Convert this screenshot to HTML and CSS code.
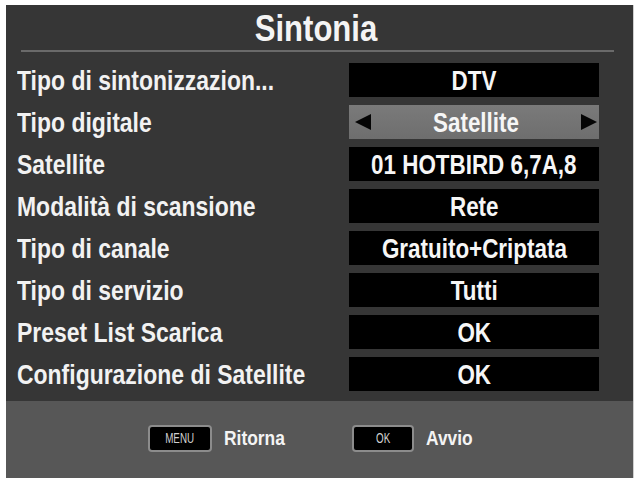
FILE: index.html
```html
<!DOCTYPE html>
<html lang="it">
<head>
<meta charset="utf-8">
<title>Sintonia</title>
<link rel="stylesheet" href="styles.css">
</head>
<body>
<div class="screen">
  <div class="header">
    <h1 class="title">Sintonia</h1>
  </div>
  <div class="divider"></div>
  <div class="rows">
    <div class="row"><span class="label"><span class="ltext">Tipo di sintonizzazion...</span></span><span class="value"><span class="vtext">DTV</span></span></div>
    <div class="row"><span class="label"><span class="ltext">Tipo digitale</span></span><span class="value selected"><span class="arrow left"></span><span class="vtext">Satellite</span><span class="arrow right"></span></span></div>
    <div class="row"><span class="label"><span class="ltext">Satellite</span></span><span class="value"><span class="vtext">01 HOTBIRD 6,7A,8</span></span></div>
    <div class="row"><span class="label"><span class="ltext">Modalità di scansione</span></span><span class="value"><span class="vtext">Rete</span></span></div>
    <div class="row"><span class="label"><span class="ltext">Tipo di canale</span></span><span class="value"><span class="vtext">Gratuito+Criptata</span></span></div>
    <div class="row"><span class="label"><span class="ltext">Tipo di servizio</span></span><span class="value"><span class="vtext">Tutti</span></span></div>
    <div class="row"><span class="label"><span class="ltext">Preset List Scarica</span></span><span class="value"><span class="vtext">OK</span></span></div>
    <div class="row"><span class="label"><span class="ltext">Configurazione di Satellite</span></span><span class="value"><span class="vtext">OK</span></span></div>
  </div>
  <div class="footer">
    <div class="hint"><span class="key menu"><span class="keytext">MENU</span></span><span class="hinttext">Ritorna</span></div>
    <div class="hint"><span class="key ok"><span class="keytext">OK</span></span><span class="hinttext">Avvio</span></div>
  </div>
</div>
</body>
</html>
```
FILE: styles.css
```css
html, body {
  margin: 0;
  padding: 0;
  background: #ffffff;
}
body {
  font-family: "Liberation Sans", Arial, sans-serif;
  font-weight: bold;
  color: #ffffff;
}
.screen {
  margin: 5px 0 0 6px;
  width: 627px;
  height: 473px;
  background: #363636;
  display: flex;
  flex-direction: column;
  box-shadow: 1px 0 0 #cfcfcf;
}
.header {
  height: 45px;
  display: flex;
  align-items: center;
  justify-content: center;
}
.title {
  margin: 0;
  font-size: 37px;
  line-height: 1;
  font-weight: bold;
  color: #f4f4f4;
  transform: scaleX(0.84);
  position: relative;
  left: -4px;
  top: 1px;
}
.divider {
  height: 2px;
  margin: 0 19px 0 15px;
  background: #6a6a6a;
}
.rows {
  padding: 11px 34px 0 11px;
  display: flex;
  flex-direction: column;
  gap: 8px;
}
.row {
  height: 34px;
  display: flex;
  align-items: center;
}
.label {
  flex: 1 1 0;
  min-width: 0;
  white-space: nowrap;
}
.ltext {
  display: inline-block;
  font-size: 27px;
  line-height: 1;
  color: #f2f2f2;
  transform: scaleX(0.85);
  transform-origin: left center;
  position: relative;
  top: 1px;
}
.value {
  flex: 0 0 250px;
  width: 250px;
  height: 34px;
  background: #000000;
  display: flex;
  align-items: center;
  justify-content: center;
  white-space: nowrap;
}
.vtext {
  display: inline-block;
  font-size: 27px;
  line-height: 1;
  color: #f6f6f6;
  transform: scaleX(0.83);
  position: relative;
  top: 1px;
}
.value.selected {
  background: linear-gradient(#7a7a7a, #6e6e6e);
  justify-content: space-between;
  padding: 0 2px 0 6px;
  box-sizing: border-box;
}
.value.selected .vtext {
  flex: 1;
  text-align: center;
}
.arrow {
  width: 0;
  height: 0;
  border-top: 8px solid transparent;
  border-bottom: 8px solid transparent;
}
.arrow.left {
  border-right: 16px solid #050505;
}
.arrow.right {
  border-left: 16px solid #050505;
}
.footer {
  margin-top: auto;
  height: 77px;
  background: #575757;
  display: flex;
  align-items: center;
  padding: 0 0 3px 142px;
  box-sizing: border-box;
}
.hint {
  display: flex;
  align-items: center;
}
.hint + .hint {
  margin-left: 58px;
}
.key {
  height: 27px;
  box-sizing: border-box;
  border: 2px solid #8c8c8c;
  border-radius: 4px;
  background: #000000;
  display: flex;
  align-items: center;
  justify-content: center;
}
.key.menu {
  width: 64px;
}
.key.ok {
  width: 62px;
}
.keytext {
  display: inline-block;
  font-family: "Liberation Sans", Arial, sans-serif;
  font-weight: normal;
  font-size: 14px;
  color: #d0d0d0;
  transform: scaleX(0.7);
}
.hinttext {
  display: inline-block;
  margin-left: 12px;
  font-size: 20px;
  color: #f4f4f4;
  transform: scaleX(0.87);
  transform-origin: left center;
}
```
